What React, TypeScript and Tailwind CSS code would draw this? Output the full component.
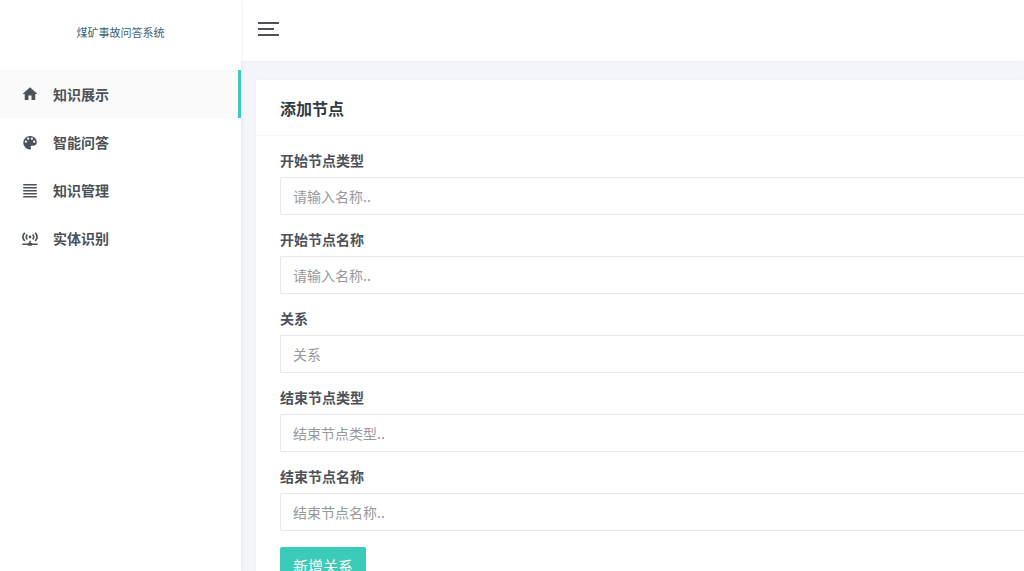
import React from "react";
import clsx from "clsx";

interface NavItem {
  label: string;
  path: string;
}

interface Field {
  id: string;
  label: string;
  placeholder: string;
}

const navItems: NavItem[] = [
  {
    label: "知识展示",
    path: "M10,20V14H14V20H19V12H22L12,3L2,12H5V20H10Z",
  },
  {
    label: "智能问答",
    path: "M17.5,13A1.5,1.5 0 0,1 16,11.5A1.5,1.5 0 0,1 17.5,10A1.5,1.5 0 0,1 19,11.5A1.5,1.5 0 0,1 17.5,13M14.5,9A1.5,1.5 0 0,1 13,7.5A1.5,1.5 0 0,1 14.5,6A1.5,1.5 0 0,1 16,7.5A1.5,1.5 0 0,1 14.5,9M9.5,9A1.5,1.5 0 0,1 8,7.5A1.5,1.5 0 0,1 9.5,6A1.5,1.5 0 0,1 11,7.5A1.5,1.5 0 0,1 9.5,9M6.5,13A1.5,1.5 0 0,1 5,11.5A1.5,1.5 0 0,1 6.5,10A1.5,1.5 0 0,1 8,11.5A1.5,1.5 0 0,1 6.5,13M12,4A9,9 0 0,0 3,13A9,9 0 0,0 12,22A1.5,1.5 0 0,0 13.5,20.5C13.5,20.11 13.35,19.76 13.11,19.5C12.88,19.23 12.73,18.88 12.73,18.5A1.5,1.5 0 0,1 14.23,17H16A5,5 0 0,0 21,12C21,7.58 16.97,4 12,4Z",
  },
  {
    label: "知识管理",
    path: "M3,4H21V6H3V4M3,8H21V10H3V8M3,12H21V14H3V12M3,16H21V18H3V16M3,20H21V22H3V20Z",
  },
  {
    label: "实体识别",
    path: "M4.4,4.4C2.6,6 1.5,8.2 1.5,10.5C1.5,12.8 2.6,15 4.4,16.6L6,15C4.6,13.8 3.8,12.2 3.8,10.5C3.8,8.8 4.6,7.2 6,6L4.4,4.4M19.6,4.4L18,6C19.4,7.2 20.2,8.8 20.2,10.5C20.2,12.2 19.4,13.8 18,15L19.6,16.6C21.4,15 22.5,12.8 22.5,10.5C22.5,8.2 21.4,6 19.6,4.4M7.7,6.5C6.6,7.6 5.9,9 5.9,10.5C5.9,12 6.6,13.4 7.7,14.5L9.2,13C8.5,12.3 8.1,11.4 8.1,10.5C8.1,9.6 8.5,8.7 9.2,8L7.7,6.5M16.3,6.5L14.8,8C15.5,8.7 15.9,9.6 15.9,10.5C15.9,11.4 15.5,12.3 14.8,13L16.3,14.5C17.4,13.4 18.1,12 18.1,10.5C18.1,9 17.4,7.6 16.3,6.5M12,8.7A1.8,1.8 0 0,0 10.2,10.5A1.8,1.8 0 0,0 12,12.3A1.8,1.8 0 0,0 13.8,10.5A1.8,1.8 0 0,0 12,8.7M11,15.5V18.4H10A1,1 0 0,0 9,19.2H1.8V21.3H9A1,1 0 0,0 10,22.2H14A1,1 0 0,0 15,21.3H22.2V19.2H15A1,1 0 0,0 14,18.4H13V15.5H11Z",
  },
];

const fields: Field[] = [
  { id: "start-type", label: "开始节点类型", placeholder: "请输入名称.." },
  { id: "start-name", label: "开始节点名称", placeholder: "请输入名称.." },
  { id: "relation", label: "关系", placeholder: "关系" },
  { id: "end-type", label: "结束节点类型", placeholder: "结束节点类型.." },
  { id: "end-name", label: "结束节点名称", placeholder: "结束节点名称.." },
];

function Sidebar() {
  const [active, setActive] = React.useState(0);

  return (
    <aside className="z-10 w-[241px] shrink-0 bg-white shadow-[0_0_5px_rgba(0,0,0,0.08)]">
      <div className="flex h-[70px] items-center justify-center pb-1">
        <a href="#" className="text-[11px] text-[#3b6474]">
          煤矿事故问答系统
        </a>
      </div>
      <nav>
        {navItems.map((item, index) => (
          <a
            key={item.label}
            href="#"
            onClick={() => setActive(index)}
            className={clsx(
              "flex h-12 items-center gap-3.5 border-r-3 pl-[21px] text-sm font-bold text-[#4d5259]",
              active === index
                ? "border-[#3dcbb9] bg-[#fafafa]"
                : "border-transparent"
            )}
          >
            <svg viewBox="0 0 24 24" className="size-[18px] fill-current">
              <path d={item.path} />
            </svg>
            {item.label}
          </a>
        ))}
      </nav>
    </aside>
  );
}

export default function App() {
  return (
    <div className="flex h-screen overflow-hidden bg-[#f3f5fa] font-['Noto_Sans_CJK_SC',sans-serif] text-sm text-[#4d5259]">
      <Sidebar />

      <div className="flex min-w-0 flex-1 flex-col">
        {/* Topbar */}
        <header className="flex h-[61px] shrink-0 items-center bg-white px-[17px] pb-1 shadow-[0_1px_3px_rgba(0,0,0,0.04)]">
          <button
            type="button"
            aria-label="菜单"
            className="flex flex-col gap-1"
          >
            <span className="h-0.5 w-[21px] bg-[#4d5259]" />
            <span className="h-0.5 w-4 bg-[#4d5259]" />
            <span className="h-0.5 w-[21px] bg-[#4d5259]" />
          </button>
        </header>

        <main className="pt-[19px] pl-[15px]">
          <section className="bg-white shadow-[0_0_4px_rgba(0,0,0,0.03)]">
            <div className="flex h-14 items-center border-b border-[#f5f5f5] px-6">
              <h4 className="text-base font-bold text-[#313944]">添加节点</h4>
            </div>

            <form
              className="flex flex-col items-start gap-4 pt-3.5 pb-4 pl-6"
              onSubmit={(e) => e.preventDefault()}
            >
              <div className="flex w-full flex-col gap-3.5">
                {fields.map((field) => (
                  <div key={field.id} className="flex flex-col gap-[7px]">
                    <label htmlFor={field.id} className="text-sm font-bold">
                      {field.label}
                    </label>
                    <input
                      id={field.id}
                      type="text"
                      placeholder={field.placeholder}
                      className="h-[38px] w-full rounded-l-xs border border-r-0 border-[#e7e8ea] px-3 text-sm outline-none placeholder:text-[#999] focus:border-[#3dcbb9]"
                    />
                  </div>
                ))}
              </div>
              <button
                type="submit"
                className="h-[38px] rounded-xs bg-[#3dcbb9] px-[13px] text-[15px] text-white hover:bg-[#52d3c7]"
              >
                新增关系
              </button>
            </form>
          </section>
        </main>
      </div>
    </div>
  );
}
